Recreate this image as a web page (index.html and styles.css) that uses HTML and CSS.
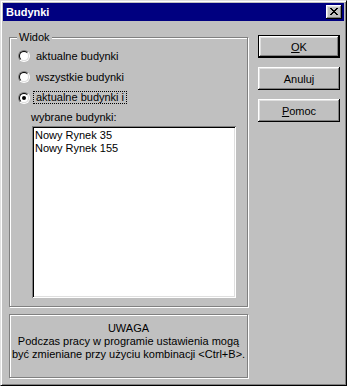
FILE: index.html
```html
<!DOCTYPE html>
<html>

<head>
  <meta charset="UTF-8">
  <title>Budynki</title>
  <link rel="stylesheet" href="styles.css">
</head>

<body>
  <div class="window">
    <div class="titlebar">
      <span class="title">Budynki</span>
      <span class="close">
        <svg width="16" height="14" viewBox="0 0 16 14">
          <path d="M4 3h2v1h1v1h2v-1h1v-1h2v1h-1v1h-1v1h-1v1h1v1h1v1h1v1h-2v-1h-1v-1h-2v1h-1v1h-2v-1h1v-1h1v-1h1v-1h-1v-1h-1v-1h-1z" fill="#000"/>
        </svg>
      </span>
    </div>
    <div class="content">
      <div class="left">
        <div class="group">
          <span class="group-label">Widok</span>
          <div class="radio-row"><span class="radio"></span><span>aktualne budynki</span></div>
          <div class="radio-row"><span class="radio"></span><span>wszystkie budynki</span></div>
          <div class="radio-row"><span class="radio checked"></span><span class="focus">aktualne budynki i</span></div>
          <div class="list-label">wybrane budynki:</div>
          <div class="listbox">
            <div>Nowy Rynek 35</div>
            <div>Nowy Rynek 155</div>
          </div>
        </div>
        <div class="note">
          UWAGA<br>
          Podczas pracy w programie ustawienia mogą<br>
          być zmieniane przy użyciu kombinacji &lt;Ctrl+B&gt;.
        </div>
      </div>
      <div class="buttons">
        <div class="btn default"><u>O</u>K</div>
        <div class="btn">Anuluj</div>
        <div class="btn"><u>P</u>omoc</div>
      </div>
    </div>
  </div>
</body>

</html>
```

FILE: styles.css
```css
body {
  margin: 0;
  background-color: #c0c0c0;
  font-family: "Liberation Sans", Arial, sans-serif;
  font-size: 11px;
  color: #000;
}

.window {
  width: 347px;
  height: 386px;
  box-sizing: border-box;
  border: 1px solid;
  border-color: #dfdfdf #000 #000 #dfdfdf;
  box-shadow: inset 1px 1px #fff, inset -1px -1px #808080;
  padding: 2px;
  background-color: #c0c0c0;
}

.titlebar {
  height: 18px;
  background-color: #000080;
  display: flex;
  align-items: center;
  justify-content: space-between;
  padding: 0 2px 0 3px;
}

.title {
  color: #fff;
  font-weight: bold;
  font-size: 11px;
}

.close {
  width: 16px;
  height: 14px;
  background-color: #c0c0c0;
  box-shadow: inset -1px -1px #000, inset 1px 1px #fff, inset -2px -2px #808080, inset 2px 2px #dfdfdf;
}

.close svg {
  display: block;
}

.content {
  display: flex;
  gap: 10px;
  padding: 14px 4px 0 6px;
}

.group,
.note {
  border: 1px solid #808080;
  box-shadow: inset 1px 1px #fff, 1px 1px #fff;
  box-sizing: border-box;
  width: 239px;
}

.group {
  position: relative;
  margin-top: 2px;
  height: 270px;
  padding-top: 7px;
}

.group-label {
  position: absolute;
  top: -7px;
  left: 7px;
  padding: 0 2px;
  line-height: 13px;
  background-color: #c0c0c0;
}

.radio-row {
  display: flex;
  align-items: center;
  height: 21px;
  padding-left: 8px;
  gap: 6px;
}

.radio {
  width: 12px;
  height: 12px;
  box-sizing: border-box;
  border-radius: 50%;
  border: 1px solid;
  border-color: #808080 #fff #fff #808080;
  position: relative;
}

.radio::before {
  content: "";
  position: absolute;
  inset: 0;
  border-radius: 50%;
  border: 1px solid;
  border-color: #000 #dfdfdf #dfdfdf #000;
  background-color: #fff;
}

.radio.checked::after {
  content: "";
  position: absolute;
  left: 3px;
  top: 3px;
  width: 4px;
  height: 4px;
  border-radius: 50%;
  background-color: #000;
}

.focus {
  margin-left: -3px;
  border: 1px dotted #000;
  padding: 0 2px;
  line-height: 11px;
}

.list-label {
  margin: 3px 0 0 21px;
  line-height: 13px;
}

.listbox {
  margin: 2px 0 0 22px;
  width: 204px;
  height: 172px;
  box-sizing: border-box;
  background-color: #fff;
  box-shadow: inset 1px 1px #808080, inset -1px -1px #fff, inset 2px 2px #000, inset -2px -2px #dfdfdf;
  padding: 3px 0 0 3px;
  line-height: 13px;
}

.note {
  margin-top: 7px;
  height: 64px;
  padding-top: 7px;
  text-align: center;
  line-height: 13px;
}

.buttons {
  display: flex;
  flex-direction: column;
  gap: 9px;
}

.btn {
  width: 82px;
  height: 23px;
  box-sizing: border-box;
  display: flex;
  align-items: center;
  justify-content: center;
  box-shadow: inset -1px -1px #000, inset 1px 1px #fff, inset -2px -2px #808080, inset 2px 2px #dfdfdf;
}

.btn.default {
  border: 1px solid #000;
}
```
